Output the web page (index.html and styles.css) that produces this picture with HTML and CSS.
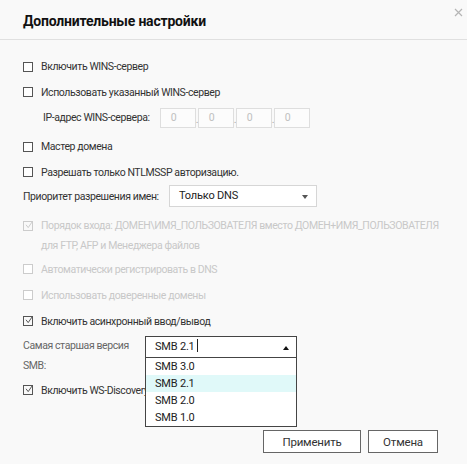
FILE: index.html
```
<!DOCTYPE html>
<html lang="ru">
<head>
    <meta charset="UTF-8">
    <title>Дополнительные настройки</title>
    <link rel="stylesheet" href="styles.css">
</head>
<body>
    <div class="dialog">
        <div class="head">
            <h1>Дополнительные настройки</h1>
            <svg class="close" width="9" height="9" viewBox="0 0 9 9"><path d="M1 1L8 8M8 1L1 8" stroke="#b5b5b5" stroke-width="1.2"/></svg>
        </div>
        <div class="body">
            <label class="row"><span class="cb"></span>Включить WINS-сервер</label>
            <label class="row"><span class="cb"></span>Использовать указанный WINS-сервер</label>
            <div class="row ip-row">
                <span class="ip-label">IP-адрес WINS-сервера:</span>
                <span class="ip">0</span><span class="dot">.</span>
                <span class="ip">0</span><span class="dot">.</span>
                <span class="ip">0</span><span class="dot">.</span>
                <span class="ip">0</span>
            </div>
            <label class="row gap"><span class="cb"></span>Мастер домена</label>
            <label class="row"><span class="cb"></span>Разрешать только NTLMSSP авторизацию.</label>
            <div class="row sel-row">
                <span class="sel-label">Приоритет разрешения имен:</span>
                <div class="select dns">Только DNS<span class="arrow down"></span></div>
            </div>
            <div class="row multi off">
                <span class="cb checked"><svg width="10" height="10" viewBox="0 0 10 10"><path d="M2 4.8L4.2 7.6L8.6 1.2" fill="none" stroke="#ccc" stroke-width="1"/></svg></span>
                <span>Порядок входа: ДОМЕН\ИМЯ_ПОЛЬЗОВАТЕЛЯ вместо ДОМЕН+ИМЯ_ПОЛЬЗОВАТЕЛЯ<br>для FTP, AFP и Менеджера файлов</span>
            </div>
            <label class="row tall off"><span class="cb"></span>Автоматически регистрировать в DNS</label>
            <label class="row tall off"><span class="cb"></span>Использовать доверенные домены</label>
            <label class="row tall"><span class="cb checked"><svg width="10" height="10" viewBox="0 0 10 10"><path d="M2 4.8L4.2 7.6L8.6 1.2" fill="none" stroke="#555" stroke-width="1"/></svg></span>Включить асинхронный ввод/вывод</label>
            <div class="smb-row">
                <span class="smb-label">Самая старшая версия SMB:</span>
                <div class="smb-wrap">
                    <div class="select smb">SMB 2.1<span class="caret"></span><span class="arrow up"></span></div>
                    <ul class="list">
                        <li>SMB 3.0</li>
                        <li class="hover">SMB 2.1</li>
                        <li>SMB 2.0</li>
                        <li>SMB 1.0</li>
                    </ul>
                </div>
            </div>
            <label class="row tall"><span class="cb checked"><svg width="10" height="10" viewBox="0 0 10 10"><path d="M2 4.8L4.2 7.6L8.6 1.2" fill="none" stroke="#555" stroke-width="1"/></svg></span>Включить WS-Discovery</label>
        </div>
        <div class="foot">
            <button class="btn apply">Применить</button>
            <button class="btn cancel">Отмена</button>
        </div>
    </div>
</body>
</html>
```
FILE: styles.css
```
*{
    margin: 0;
    padding: 0;
    box-sizing: border-box;
}
html,body{
    height: 100%;
}
body{
    background: #f9f9f9;
    font-family: Roboto, "Noto Sans", sans-serif;
    font-size: 10.5px;
    letter-spacing: -0.4px;
    color: #333;
}
.dialog{
    width: 467px;
    height: 464px;
}
.head{
    height: 40px;
    border-bottom: 1px solid #e0e0e0;
    padding: 11px 23px 0;
    position: relative;
}
.head h1{
    font-size: 14px;
    letter-spacing: -0.2px;
    font-weight: bold;
    color: #111;
    line-height: 20px;
}
.close{
    position: absolute;
    right: 4px;
    top: 8px;
}
.body{
    padding: 14px 0 0 23px;
    display: flex;
    flex-direction: column;
}
.row{
    display: flex;
    align-items: center;
    height: 25.5px;
}
.row.tall{
    height: 26px;
}
.row.gap{
    margin-top: 3px;
    height: 26px;
}
.cb{
    width: 10px;
    height: 10px;
    border: 1px solid #555;
    background: #fff;
    margin-right: 8px;
    flex: none;
    position: relative;
}
.cb svg{
    position: absolute;
    left: 0;
    top: -2px;
}
.cb.checked{
    background: transparent;
}
.off{
    color: #c8c8c8;
}
.off .cb{
    border-color: #ccc;
}
.ip-row{
    padding-left: 20px;
}
.ip-label{
    margin-right: 10px;
}
.ip{
    width: 36px;
    height: 20px;
    border: 1px solid #dedede;
    background: #fcfcfc;
    color: #c0c0c0;
    padding-left: 10px;
    line-height: 18px;
}
.dot{
    width: 2px;
    align-self: flex-end;
    line-height: 18px;
    color: #aaa;
    margin-bottom: 2px;
}
.sel-row{
    height: 22px;
}
.sel-label{
    width: 146px;
}
.select{
    height: 22px;
    background: #fff;
    position: relative;
    line-height: 20px;
    font-size: 11px;
    letter-spacing: -0.2px;
    color: #222;
}
.dns{
    width: 148px;
    border: 1px solid #d6d6d6;
    padding-left: 9px;
}
.arrow{
    position: absolute;
    width: 0;
    height: 0;
    border-left: 3px solid transparent;
    border-right: 3px solid transparent;
    top: 9px;
}
.arrow.down{
    border-top: 4px solid #555;
    right: 8px;
}
.arrow.up{
    border-bottom: 4px solid #111;
    right: 7px;
}
.multi{
    height: 40px;
    margin-top: 9px;
    align-items: flex-start;
    line-height: 20px;
}
.multi .cb{
    margin-top: 5px;
}
.smb-row{
    display: flex;
    margin-top: 2px;
    height: 41px;
}
.smb-label{
    width: 122px;
    padding-right: 8px;
    line-height: 20px;
    color: #666;
}
.smb-wrap{
    position: relative;
}
.smb{
    width: 152px;
    border: 1px solid #444;
    padding-left: 9px;
}
.caret{
    display: inline-block;
    width: 1px;
    height: 13px;
    background: #222;
    margin-left: 2px;
    vertical-align: -2px;
}
.list{
    position: absolute;
    top: 22px;
    left: 0;
    width: 152px;
    background: #fff;
    border: 1px solid #444;
    border-top: none;
    list-style: none;
    z-index: 2;
}
.list li{
    height: 17px;
    line-height: 17px;
    padding-left: 9px;
    font-size: 11px;
    letter-spacing: -0.2px;
    color: #222;
}
.list li.hover{
    background: #e0f9f9;
}
.foot{
    position: absolute;
    top: 430px;
    right: 29px;
    display: flex;
    gap: 7px;
}
.btn{
    height: 23px;
    border: 1px solid #666;
    background: #fff;
    font-family: Roboto, "Noto Sans", sans-serif;
    font-size: 11.5px;
    letter-spacing: -0.2px;
    color: #333;
}
.apply{
    width: 98px;
}
.cancel{
    width: 70px;
}
```
